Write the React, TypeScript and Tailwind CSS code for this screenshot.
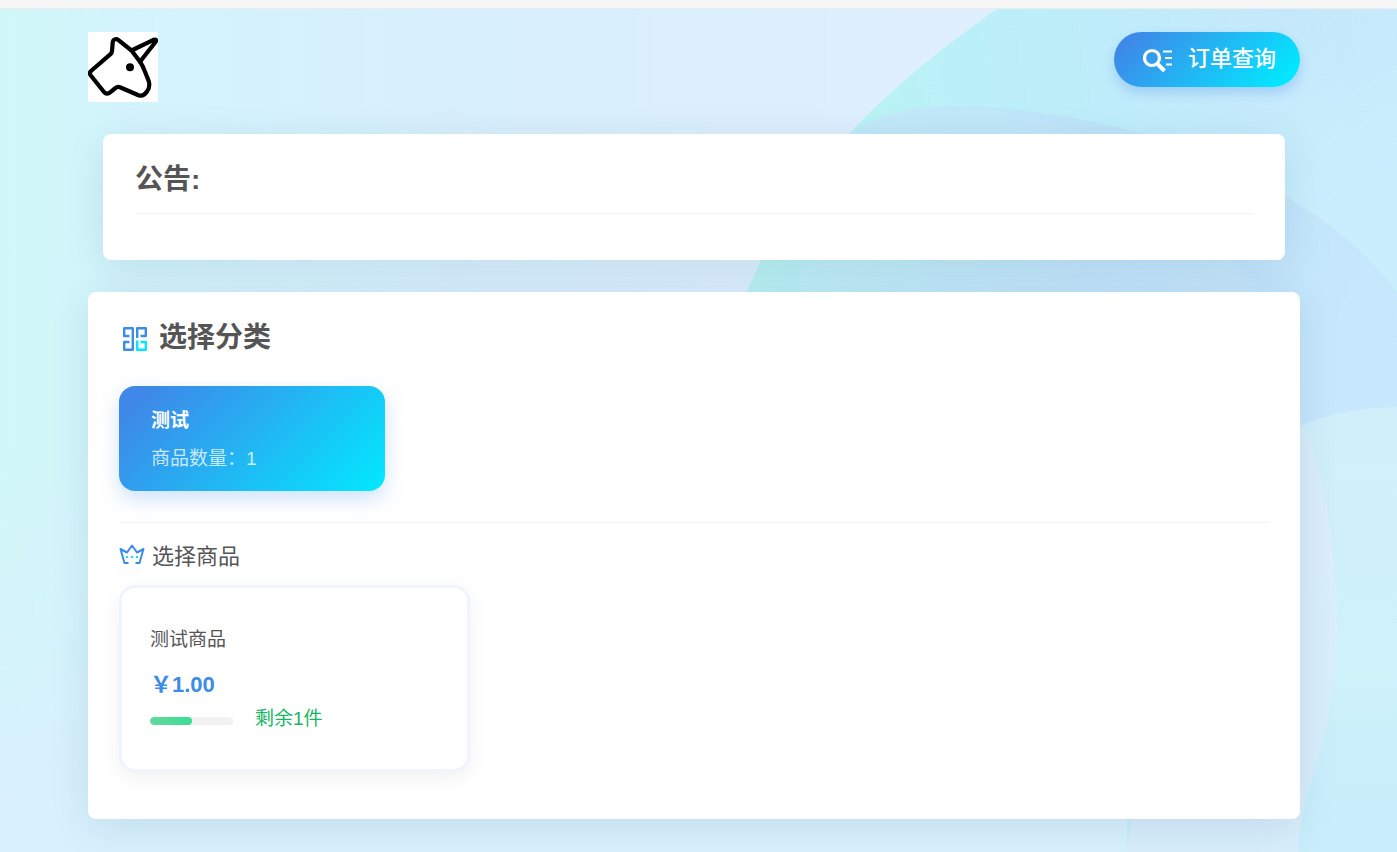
const categories = [{ id: 1, name: '测试', count: 1 }]

const products = [{ id: 1, name: '测试商品', price: '1.00', stock: 1, progress: 50 }]

export default function App() {
  return (
    <div className="relative min-h-screen overflow-hidden bg-[#d8f1fd] font-['Liberation_Sans','Noto_Sans_CJK_SC',sans-serif] text-[#555]">
      <Backdrop />

      <div className="relative">
        <div className="h-[9px] border-b border-[#ececec] bg-[#f7f7f7]" />

        <div className="pt-[23px] pr-[97px] pb-[33px] pl-[88px]">
          <header className="flex items-start justify-between">
            <a href="#" aria-label="首页" className="block bg-white">
              <Logo />
            </a>
            <a
              href="#orders"
              className="flex h-[55px] items-center gap-[15px] rounded-full bg-[linear-gradient(135deg,#3f87e8_8%,#04e6fe_90%)] pr-6 pb-[2px] pl-[29px] text-[22px] font-medium text-white shadow-[0_6px_12px_rgba(68,129,235,0.28)]"
            >
              <SearchListIcon />
              <span className="leading-8">订单查询</span>
            </a>
          </header>

          <section className="mx-[15px] mt-8 rounded-lg bg-white px-8 pt-[25px] pb-[46px] shadow-[0_8px_40px_rgba(8,60,100,0.11)]">
            <h2 className="text-[28px] leading-[42px] font-bold">公告:</h2>
            <hr className="mt-3 border-[#f4f4f4]" />
          </section>

          <main className="mt-8 rounded-lg bg-white px-[31px] pt-[25px] pb-[47px] shadow-[0_8px_40px_rgba(8,60,100,0.11)]">
            <h2 className="flex items-center gap-3 text-[28px] leading-[42px] font-bold">
              <CategoryIcon />
              选择分类
            </h2>

            <div className="mt-[27px] flex flex-wrap gap-6">
              {categories.map((category) => (
                <button
                  key={category.id}
                  type="button"
                  className="w-[266px] rounded-2xl bg-[linear-gradient(135deg,#3f87e8_8%,#04e6fe_97%)] px-8 pt-4 pb-[13px] text-left text-[19px] leading-[38px] text-white shadow-[0_8px_20px_rgba(60,140,231,0.25)]"
                >
                  <span className="block font-bold">{category.name}</span>
                  <span className="block text-white/75">商品数量：{category.count}</span>
                </button>
              ))}
            </div>

            <hr className="mt-[31px] border-[#f4f4f4]" />

            <h3 className="mt-[18px] flex items-center gap-[7px] text-[22px] leading-8">
              <CrownIcon />
              选择商品
            </h3>

            <div className="mt-3 flex flex-wrap gap-6">
              {products.map((product) => (
                <a
                  key={product.id}
                  href="#product"
                  className="block w-[351px] rounded-2xl border-3 border-[#f1f4fd] bg-white px-7 pt-9 pb-[34px] shadow-[0_6px_20px_rgba(0,0,0,0.06)]"
                >
                  <h4 className="text-[19px] leading-8">{product.name}</h4>
                  <p className="mt-[13px] text-[22px] leading-8 font-bold text-[#3c8ce7]">￥{product.price}</p>
                  <div className="mt-[2px] flex items-center gap-[22px]">
                    <div
                      role="progressbar"
                      aria-label="库存"
                      aria-valuenow={product.progress}
                      className="mt-1 h-2 w-[83px] overflow-hidden rounded-full bg-[#f2f2f2]"
                    >
                      <div
                        className="h-full rounded-full bg-linear-to-r from-[#60d89d] to-[#38dd94]"
                        style={{ width: `${product.progress}%` }}
                      />
                    </div>
                    <span className="text-[19px] leading-8 text-[#18b566]">剩余{product.stock}件</span>
                  </div>
                </a>
              ))}
            </div>
          </main>
        </div>
      </div>
    </div>
  )
}

function Backdrop() {
  return (
    <svg
      className="absolute inset-0 h-full w-full"
      viewBox="0 0 1397 852"
      preserveAspectRatio="none"
      aria-hidden="true"
    >
      <defs>
        <linearGradient id="sky" x1="0" y1="0" x2="1397" y2="0" gradientUnits="userSpaceOnUse">
          <stop offset="0" stopColor="#d1f8f9" />
          <stop offset="0.08" stopColor="#d3f4fc" />
          <stop offset="0.35" stopColor="#d8effd" />
          <stop offset="0.7" stopColor="#e0effe" />
        </linearGradient>
        <linearGradient id="skyFade" x1="0" y1="450" x2="0" y2="800" gradientUnits="userSpaceOnUse">
          <stop offset="0" stopColor="#d8f1fd" stopOpacity="0" />
          <stop offset="1" stopColor="#d8f1fd" />
        </linearGradient>
        <linearGradient id="disc" x1="850" y1="160" x2="1397" y2="60" gradientUnits="userSpaceOnUse">
          <stop offset="0" stopColor="#b9f3f3" />
          <stop offset="0.3" stopColor="#bceffa" />
          <stop offset="0.75" stopColor="#c4e9fb" />
          <stop offset="1" stopColor="#c6e8fb" />
        </linearGradient>
        <linearGradient id="discGlow" x1="1180" y1="80" x2="1280" y2="250" gradientUnits="userSpaceOnUse">
          <stop offset="0" stopColor="#c9effd" stopOpacity="0" />
          <stop offset="1" stopColor="#c9effd" />
        </linearGradient>
        <linearGradient id="wave" x1="850" y1="110" x2="1397" y2="400" gradientUnits="userSpaceOnUse">
          <stop offset="0" stopColor="#bdeaf7" />
          <stop offset="0.45" stopColor="#bfe3fa" />
          <stop offset="1" stopColor="#c8e8fd" />
        </linearGradient>
        <linearGradient id="teal" x1="750" y1="0" x2="1100" y2="0" gradientUnits="userSpaceOnUse">
          <stop offset="0" stopColor="#b9f1f3" />
          <stop offset="1" stopColor="#bfe6f8" stopOpacity="0" />
        </linearGradient>
        <linearGradient id="low" x1="0" y1="407" x2="0" y2="852" gradientUnits="userSpaceOnUse">
          <stop offset="0" stopColor="#d0effb" />
          <stop offset="0.6" stopColor="#cef1fa" />
          <stop offset="1" stopColor="#c8eefc" />
        </linearGradient>
      </defs>
      <rect width="1397" height="852" fill="url(#sky)" />
      <rect width="1397" height="852" fill="url(#skyFade)" />
      <path d="M1010 0C940 48 890 90 850 133C810 180 775 225 747 292C690 440 760 640 900 740H1397V0Z" fill="url(#disc)" />
      <path d="M1010 0C940 48 890 90 850 133V420H1397V0Z" fill="url(#discGlow)" />
      <path d="M850 133C880 112 925 103 985 107C1050 112 1095 121 1140 133C1190 148 1240 172 1285 196C1330 221 1370 256 1397 292V640H760V250Z" fill="url(#wave)" />
      <path d="M850 133C810 180 775 225 747 292V330H1100V133Z" fill="url(#teal)" />
      <path d="M1127 852C1127 600 1190 410 1397 407V852Z" fill="url(#low)" />
      <path
        d="M850 133C880 112 915 104 955 106C1010 109 1040 119 1080 133C1150 163 1200 211 1233 261C1266 307 1285 355 1300 403C1300 412 1303 420 1308 429L1270 440H800V250Z"
        fill="#dfeefb"
        fillOpacity="0.12"
      />
      <path
        d="M1260 446Q1280 434 1308 429C1327 492 1337 555 1337 620C1337 690 1323 745 1311 782C1303 808 1299 830 1298 852H1127L1140 760L1250 600Z"
        fill="#dcedfb"
        fillOpacity="0.8"
      />
    </svg>
  )
}

function Logo() {
  return (
    <svg width="70" height="70" viewBox="0 0 70 70" fill="none" aria-hidden="true">
      <path
        d="M43.5 18.5L30.5 8.2C28 6.2 25 7.3 24.7 10.5L24 19Q23.8 21 22.5 22.2L3 39Q1 41 2.6 43.2L16 60Q18.5 62.8 21.5 60.8L27.5 56Q29.5 54.3 32 55.3L50.5 63.2C54 64.5 57 62.5 59 59.5C61.5 56 62 52.5 60.5 48.5L56.5 38.5Q55 34 52 29.7"
        stroke="#000"
        strokeWidth="4.2"
        strokeLinejoin="round"
      />
      <path d="M43.5 18.5L65.5 7.8Q69.3 6.8 67.5 10L52 29.7Z" stroke="#000" strokeWidth="4.2" strokeLinejoin="round" />
      <circle cx="42" cy="35.3" r="4" fill="#000" />
    </svg>
  )
}

function SearchListIcon() {
  return (
    <svg className="mt-[2px]" width="30" height="24" viewBox="0 0 30 24" fill="none" stroke="#fff" aria-hidden="true">
      <circle cx="9" cy="10" r="7.5" strokeWidth="3.2" />
      <path d="M15 16.5L21.5 23" strokeWidth="4" />
      <path d="M20 3.5H29M22 10H29M23 16.5H29" strokeWidth="1.8" />
    </svg>
  )
}

function CategoryIcon() {
  return (
    <svg className="mt-[2px] ml-1" width="24" height="24" viewBox="0 0 24 24" fill="none" stroke="#3c8ce7" strokeWidth="2.4" aria-hidden="true">
      <path d="M6.5 9H1.2V1.2H9.8V22.8H1.2V15H6.5" strokeLinejoin="round" />
      <path d="M14.2 11V1.2H22.8V9H17.5" strokeLinejoin="round" />
      <path d="M14.2 13.5V22.8H22.8V15H17.5" stroke="#04e6fe" strokeLinejoin="round" />
    </svg>
  )
}

function CrownIcon() {
  return (
    <svg className="-mt-1" width="26" height="22" viewBox="0 0 26 22" fill="none" aria-hidden="true">
      <path
        d="M9.5 19H5.5L1.5 5L8 8.5L13 1.5L18 8.5L24.5 5L20.5 19H16.5"
        stroke="#3c8ce7"
        strokeWidth="2"
        strokeLinejoin="round"
      />
      <path d="M7 13H9M12 13H14M17 13H19" stroke="#04e6fe" strokeWidth="2" />
    </svg>
  )
}
